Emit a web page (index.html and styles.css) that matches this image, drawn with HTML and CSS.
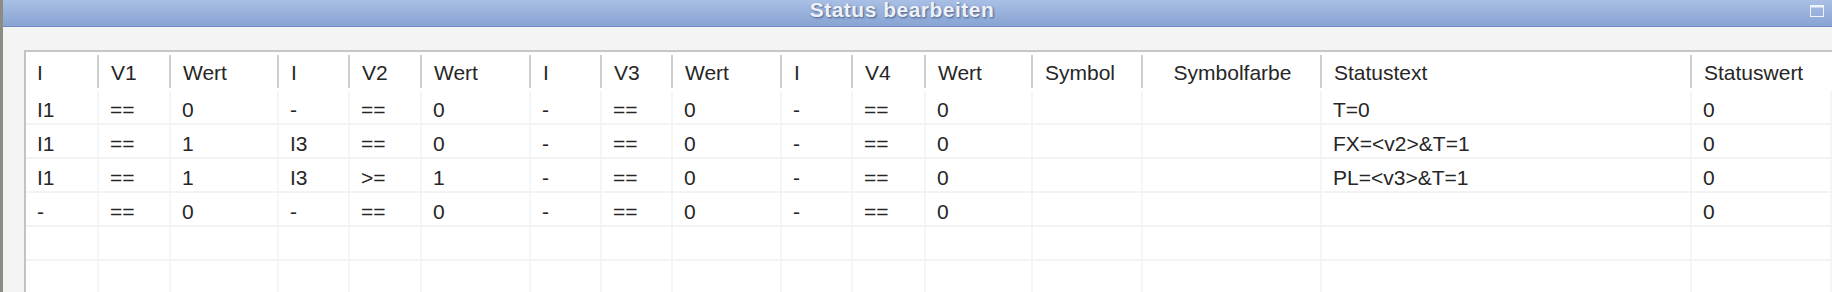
FILE: index.html
```html
<!DOCTYPE html>
<html>
<head>
<meta charset="utf-8">
<link rel="stylesheet" href="styles.css">
</head>
<body>
<div class="window">
  <div class="titlebar">
    <span class="title">Status bearbeiten</span>
    <span class="spacer"></span>
    <svg class="max-icon" width="16" height="14" viewBox="0 0 16 14">
      <rect x="1.5" y="1.5" width="13" height="11" fill="none" stroke="#eef2f9" stroke-width="1"/>
      <rect x="1" y="1" width="14" height="2.5" fill="#eef2f9"/>
    </svg>
  </div>
  <div class="content">
    <div class="table">
      <div class="row head">
        <div class="hc">I</div><div class="hc">V1</div><div class="hc">Wert</div>
        <div class="hc">I</div><div class="hc">V2</div><div class="hc">Wert</div>
        <div class="hc">I</div><div class="hc">V3</div><div class="hc">Wert</div>
        <div class="hc">I</div><div class="hc">V4</div><div class="hc">Wert</div>
        <div class="hc">Symbol</div><div class="hc center">Symbolfarbe</div>
        <div class="hc">Statustext</div><div class="hc last">Statuswert</div>
      </div>
      <div class="row">
        <div class="c">I1</div><div class="c">==</div><div class="c">0</div>
        <div class="c">-</div><div class="c">==</div><div class="c">0</div>
        <div class="c">-</div><div class="c">==</div><div class="c">0</div>
        <div class="c">-</div><div class="c">==</div><div class="c">0</div>
        <div class="c"></div><div class="c"></div>
        <div class="c">T=0</div><div class="c">0</div>
      </div>
      <div class="row">
        <div class="c">I1</div><div class="c">==</div><div class="c">1</div>
        <div class="c">I3</div><div class="c">==</div><div class="c">0</div>
        <div class="c">-</div><div class="c">==</div><div class="c">0</div>
        <div class="c">-</div><div class="c">==</div><div class="c">0</div>
        <div class="c"></div><div class="c"></div>
        <div class="c">FX=&lt;v2&gt;&amp;T=1</div><div class="c">0</div>
      </div>
      <div class="row">
        <div class="c">I1</div><div class="c">==</div><div class="c">1</div>
        <div class="c">I3</div><div class="c">&gt;=</div><div class="c">1</div>
        <div class="c">-</div><div class="c">==</div><div class="c">0</div>
        <div class="c">-</div><div class="c">==</div><div class="c">0</div>
        <div class="c"></div><div class="c"></div>
        <div class="c">PL=&lt;v3&gt;&amp;T=1</div><div class="c">0</div>
      </div>
      <div class="row">
        <div class="c">-</div><div class="c">==</div><div class="c">0</div>
        <div class="c">-</div><div class="c">==</div><div class="c">0</div>
        <div class="c">-</div><div class="c">==</div><div class="c">0</div>
        <div class="c">-</div><div class="c">==</div><div class="c">0</div>
        <div class="c"></div><div class="c"></div>
        <div class="c"></div><div class="c">0</div>
      </div>
      <div class="row">
        <div class="c"></div><div class="c"></div><div class="c"></div>
        <div class="c"></div><div class="c"></div><div class="c"></div>
        <div class="c"></div><div class="c"></div><div class="c"></div>
        <div class="c"></div><div class="c"></div><div class="c"></div>
        <div class="c"></div><div class="c"></div>
        <div class="c"></div><div class="c"></div>
      </div>
      <div class="row">
        <div class="c"></div><div class="c"></div><div class="c"></div>
        <div class="c"></div><div class="c"></div><div class="c"></div>
        <div class="c"></div><div class="c"></div><div class="c"></div>
        <div class="c"></div><div class="c"></div><div class="c"></div>
        <div class="c"></div><div class="c"></div>
        <div class="c"></div><div class="c"></div>
      </div>
    </div>
  </div>
</div>
</body>
</html>
```
FILE: styles.css
```css
html, body {
  margin: 0;
  padding: 0;
}
body {
  width: 1832px;
  height: 292px;
  overflow: hidden;
  background: #f4f4f4;
  font-family: "Liberation Sans", Arial, sans-serif;
}
.window {
  display: flex;
  flex-direction: column;
  height: 292px;
  border-left: 3px solid #8c8c84;
  box-sizing: border-box;
}
.titlebar {
  display: grid;
  grid-template-columns: 1798px 1fr auto;
  align-items: center;
  height: 26px;
  background: linear-gradient(#a9bfe5, #88a4d3);
  border-bottom: 1px solid #6f8bbf;
  padding-right: 7px;
}
.title {
  text-align: center;
  font-weight: bold;
  font-size: 21px;
  letter-spacing: 0.5px;
  color: #eef2f8;
  text-shadow: 1px 1px 2px rgba(40, 60, 100, 0.7);
  line-height: 22px;
  margin-top: -6px;
}
.max-icon {
  display: block;
  margin-top: -4px;
}
.content {
  flex: 1;
  padding: 23px 0 0 21px;
  overflow: hidden;
}
.table {
  background: #fff;
  border-top: 2px solid #c6c6c6;
  border-left: 2px solid #c2c2c2;
  height: 100%;
  color: #262626;
  font-size: 21px;
}
.row {
  display: grid;
  grid-template-columns: 73px 72px 108px 71px 72px 109px 71px 71px 109px 71px 73px 107px 110px 179px 370px 1fr;
  height: 34px;
  box-sizing: border-box;
  border-bottom: 2px solid #f3f3f3;
}
.row.head {
  height: 39px;
  border-bottom: none;
}
.hc {
  padding-left: 12px;
  padding-top: 2px;
  display: flex;
  align-items: center;
  white-space: nowrap;
  background: linear-gradient(#cdcdcd, #cdcdcd) right center / 2px 33px no-repeat;
}
.hc:first-child {
  padding-left: 11px;
}
.hc.center {
  justify-content: center;
  padding-left: 0;
}
.hc.last {
  background: none;
}
.c {
  padding-left: 11px;
  padding-top: 5px;
  display: flex;
  align-items: center;
  white-space: nowrap;
  border-right: 2px solid #f5f5f5;
}
```
